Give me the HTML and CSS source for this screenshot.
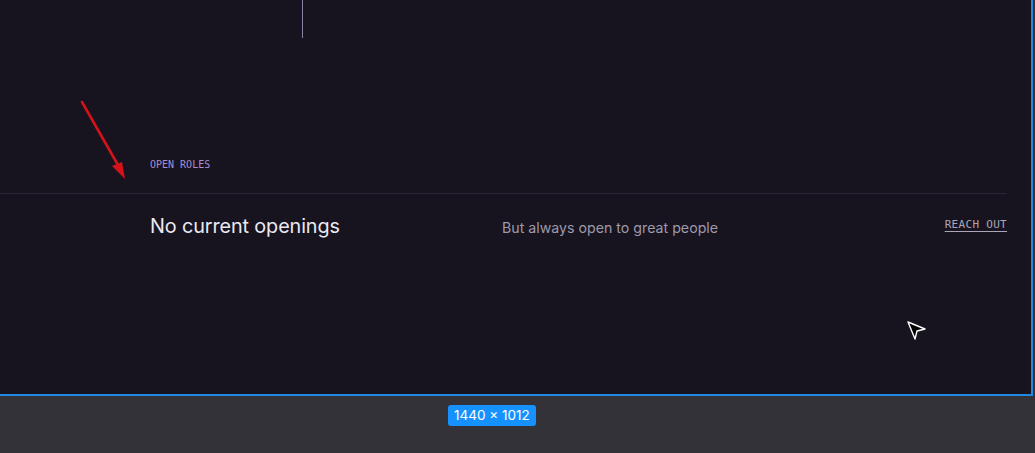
FILE: index.html
```html
<!DOCTYPE html>
<html lang="en">
<head>
    <meta charset="UTF-8">
    <meta name="viewport" content="width=device-width, initial-scale=1.0">
    <title>Careers - Open Roles</title>
    <link rel="stylesheet" href="styles.css">
</head>
<body>
    <div class="frame">
        <div class="timeline-line"></div>

        <section class="roles">
            <div class="roles-head">
                <p class="eyebrow">OPEN ROLES</p>
            </div>
            <div class="role-row">
                <h2 class="role-title">No current openings</h2>
                <p class="role-note">But always open to great people</p>
                <a class="role-link" href="#">REACH OUT</a>
            </div>
        </section>

        <!-- annotation arrow -->
        <svg class="annotation" width="60" height="100" viewBox="0 0 60 100">
            <line x1="6" y1="6" x2="46" y2="76" stroke="#d4121a" stroke-width="2.6" stroke-linecap="round"/>
            <polygon points="49,83 36,70 46,66" fill="#d4121a"/>
        </svg>

        <!-- mouse pointer -->
        <svg class="pointer" width="22" height="22" viewBox="0 0 22 22">
            <polygon points="2,2 19,9 11,11 9,19" fill="#000" stroke="#fff" stroke-width="1.4" stroke-linejoin="round"/>
        </svg>
    </div>

    <div class="footer-bar">
        <span class="size-badge">1440 × 1012</span>
    </div>
</body>
</html>
```

FILE: styles.css
```css
body {
    margin: 0;
    background-color: #333238;
    font-family: Inter, "Noto Sans", sans-serif;
}
.frame {
    position: relative;
    width: 1031px;
    height: 394px;
    background-color: #17141f;
    border-right: 2px solid #2088e0;
    border-bottom: 2px solid #2088e0;
    overflow: hidden;
}
.timeline-line {
    margin-left: 302px;
    width: 1px;
    height: 38px;
    background-color: #8b82a3;
}
.roles {
    width: 1007px;
    margin-top: 121px;
}
.roles-head {
    padding: 0 0 22px 150px;
    border-bottom: 1px solid #2a2736;
}
.eyebrow {
    margin: 0;
    font-family: "DejaVu Sans Mono", monospace;
    font-size: 10px;
    line-height: 12px;
    color: #a48fd6;
}
.role-row {
    display: flex;
    align-items: baseline;
    padding: 18px 0 0 150px;
}
.role-title {
    width: 352px;
    margin: 0;
    font-size: 19.8px;
    font-weight: 400;
    line-height: 28px;
    letter-spacing: -0.1px;
    color: #ebe8f2;
}
.role-note {
    flex: 1;
    margin: 0;
    font-size: 14.2px;
    color: #9e9aab;
}
.role-link {
    align-self: flex-start;
    margin-top: 6px;
    font-family: "DejaVu Sans Mono", monospace;
    font-size: 11px;
    line-height: 13px;
    letter-spacing: 0.3px;
    color: #aaa6b8;
    text-decoration: underline;
    text-underline-offset: 3px;
}
.annotation {
    position: absolute;
    left: 76px;
    top: 96px;
}
.pointer {
    position: absolute;
    left: 906px;
    top: 320px;
}
.footer-bar {
    padding-top: 8px;
    padding-left: 448px;
}
.size-badge {
    display: inline-block;
    padding: 0 6px;
    height: 21px;
    line-height: 21px;
    border-radius: 3px;
    background-color: #1592ff;
    color: #fff;
    font-size: 13.5px;
}
```
